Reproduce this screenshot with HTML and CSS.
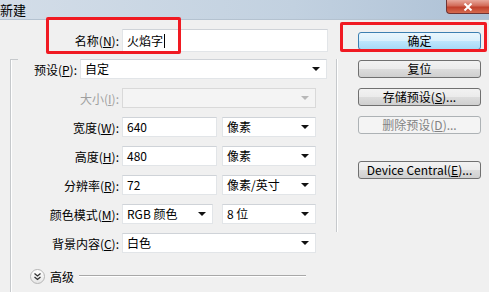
FILE: index.html
```html
<!DOCTYPE html>
<html lang="zh-CN">
<head>
  <meta charset="UTF-8">
  <title>新建</title>
  <link rel="stylesheet" href="styles.css">
</head>
<body>
  <div class="window">
    <div class="titlebar">
      <span class="title">新建</span>
      <div class="close">
        <svg width="10" height="8" viewBox="0 0 10 8"><path d="M1.5 0.5 L8.5 7.5 M8.5 0.5 L1.5 7.5" stroke="#fff" stroke-width="2"/></svg>
      </div>
    </div>
    <div class="dialog">
      <div class="form">
        <div class="row name-row">
          <label class="lbl">名称(<u>N</u>):</label>
          <div class="box name">火焰字<span class="caret"></span></div>
        </div>
        <div class="group">
          <div class="row preset-row">
            <label class="lbl short">预设(<u>P</u>):</label>
            <div class="box select preset">自定</div>
          </div>
          <div class="row">
            <label class="lbl disabled">大小(<u>I</u>):</label>
            <div class="box select off wide"></div>
          </div>
          <div class="row">
            <label class="lbl">宽度(<u>W</u>):</label>
            <div class="box num">640</div>
            <div class="box select unit">像素</div>
          </div>
          <div class="row">
            <label class="lbl">高度(<u>H</u>):</label>
            <div class="box num">480</div>
            <div class="box select unit">像素</div>
          </div>
          <div class="row">
            <label class="lbl">分辨率(<u>R</u>):</label>
            <div class="box num">72</div>
            <div class="box select unit">像素/英寸</div>
          </div>
          <div class="row">
            <label class="lbl">颜色模式(<u>M</u>):</label>
            <div class="box select mode">RGB 颜色</div>
            <div class="box select bits">8 位</div>
          </div>
          <div class="row">
            <label class="lbl">背景内容(<u>C</u>):</label>
            <div class="box select wide">白色</div>
          </div>
          <div class="advanced">
            <span class="toggle">
              <svg width="9" height="9" viewBox="0 0 9 9"><path d="M1.5 1.5 L4.5 4 L7.5 1.5 M1.5 5 L4.5 7.5 L7.5 5" fill="none" stroke="#333" stroke-width="1.3"/></svg>
            </span>
            <span class="adv-text">高级</span>
            <span class="adv-line"></span>
          </div>
        </div>
      </div>
      <div class="buttons">
        <div class="btn default">确定</div>
        <div class="btn">复位</div>
        <div class="btn">存储预设(<u>S</u>)...</div>
        <div class="btn disabled">删除预设(<u>D</u>)...</div>
        <div class="btn device">Device Central(<u>E</u>)...</div>
      </div>
    </div>
    <div class="mark mark-name"></div>
    <div class="mark mark-ok"></div>
  </div>
</body>
</html>
```

FILE: styles.css
```css
body {
  margin: 0;
  width: 489px;
  height: 292px;
  overflow: hidden;
  background: #f0f0f0;
  font-family: "Noto Sans CJK SC", "Noto Sans", sans-serif;
  font-size: 12px;
  color: #000;
}
u {
  text-decoration: underline;
  text-underline-offset: 1px;
}
.window {
  position: relative;
  height: 292px;
}
.titlebar {
  height: 20px;
  display: flex;
  background: linear-gradient(to right, #d3dde8, #c2d1e0 60%, #adc1d6);
  border-bottom: 1px solid #b4c2d0;
  box-sizing: border-box;
}
.title {
  font-size: 13px;
  line-height: 19px;
  margin-left: 0;
}
.close {
  margin-left: auto;
  width: 43px;
  height: 14px;
  box-sizing: border-box;
  border: 1px solid #6f3434;
  border-top: none;
  border-right: none;
  border-radius: 0 0 0 4px;
  background: linear-gradient(#e8a89c, #d26a58 45%, #c0402c 55%, #d66b4f);
  display: flex;
  align-items: center;
  justify-content: center;
}
.dialog {
  display: flex;
}
.form {
  width: 340px;
}
.row {
  display: flex;
  align-items: center;
  height: 20px;
  margin-top: 9px;
}
.lbl {
  width: 108px;
  text-align: right;
  white-space: nowrap;
}
.lbl.short {
  width: 66px;
}
.lbl.disabled {
  color: #a0a0a0;
}
.name-row {
  margin-top: 9px;
  height: 23px;
}
.name-row .lbl {
  width: 119px;
}
.box {
  height: 20px;
  box-sizing: border-box;
  margin-left: 3px;
  background: #fff;
  border: 1px solid #e2e5e8;
  border-top-color: #cfd3d8;
  padding-left: 4px;
  line-height: 18px;
  position: relative;
  white-space: nowrap;
}
.name {
  width: 206px;
  height: 23px;
  line-height: 21px;
}
.caret {
  display: inline-block;
  width: 1px;
  height: 14px;
  background: #000;
  vertical-align: -2px;
  margin-left: 1px;
}
.select::after {
  content: "";
  position: absolute;
  right: 6px;
  top: 7px;
  border-left: 4px solid transparent;
  border-right: 4px solid transparent;
  border-top: 4px solid #111;
}
.select.off {
  background: #f4f4f4;
  border-color: #d9d9d9;
}
.select.off::after {
  border-top-color: #b8b8b8;
}
.group {
  margin-left: 10px;
  margin-top: 13px;
  width: 327px;
  height: 240px;
  position: relative;
  border-left: 1px solid #c6c9cc;
  box-shadow: inset 1px 0 #fff;
}
.group::before {
  content: "";
  position: absolute;
  left: 0;
  top: 0;
  width: 7px;
  border-top: 1px solid #c6c9cc;
}
.group::after {
  content: "";
  position: absolute;
  right: 0;
  top: 0;
  height: 173px;
  border-left: 1px solid #c6c9cc;
  border-right: 1px solid #fff;
}
.preset-row {
  margin-top: -6px;
}
.preset {
  width: 247px;
}
.wide {
  width: 194px;
}
.num {
  width: 95px;
}
.unit {
  width: 94px;
  margin-left: 5px;
}
.mode {
  width: 91px;
}
.bits {
  width: 94px;
  margin-left: 9px;
}
.advanced {
  display: flex;
  align-items: center;
  height: 16px;
  margin-top: 15px;
}
.toggle {
  margin-left: 19px;
  width: 15px;
  height: 15px;
  box-sizing: border-box;
  border-radius: 50%;
  border: 1px solid #b5b5b5;
  background: linear-gradient(#ffffff, #e6e6e6);
  display: flex;
  align-items: center;
  justify-content: center;
}
.adv-text {
  margin-left: 5px;
}
.adv-line {
  margin-left: 5px;
  width: 227px;
  border-top: 1px solid #a8a8a8;
  border-bottom: 1px solid #fff;
}
.buttons {
  margin-left: 18px;
  width: 123px;
  padding-top: 12px;
  display: flex;
  flex-direction: column;
  gap: 10px;
}
.btn {
  height: 18px;
  box-sizing: border-box;
  border: 1px solid #707070;
  border-radius: 3px;
  background: linear-gradient(#f2f2f2, #ebebeb 50%, #dddddd 50%, #cfcfcf);
  text-align: center;
  line-height: 16px;
  white-space: nowrap;
}
.btn.default {
  border-color: #3c7fb1;
  background: linear-gradient(#eaf6fd, #d9f0fc 50%, #bee6fd 50%, #a7d9f5);
}
.btn.disabled {
  border-color: #adb2b5;
  background: #f4f4f4;
  color: #838383;
}
.btn.device {
  margin-top: 17px;
}
.mark {
  position: absolute;
  border: 3px solid #f01a22;
  border-radius: 2px;
}
.mark-name {
  left: 46px;
  top: 17px;
  width: 129px;
  height: 31px;
}
.mark-ok {
  left: 340px;
  top: 22px;
  width: 141px;
  height: 24px;
}
```
